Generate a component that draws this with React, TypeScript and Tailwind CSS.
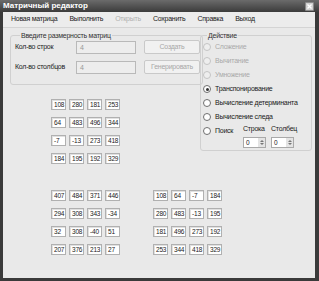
const m1 = [
  ["108", "280", "181", "253"],
  ["64", "483", "496", "344"],
  ["-7", "-13", "273", "418"],
  ["184", "195", "192", "329"],
];

const m2 = [
  ["407", "484", "371", "446"],
  ["294", "308", "343", "-34"],
  ["32", "308", "-40", "51"],
  ["207", "376", "213", "27"],
];

const m3 = [
  ["108", "64", "-7", "184"],
  ["280", "483", "-13", "195"],
  ["181", "496", "273", "192"],
  ["253", "344", "418", "329"],
];

const menu = [
  { label: "Новая матрица" },
  { label: "Выполнить" },
  { label: "Открыть", disabled: true },
  { label: "Сохранить" },
  { label: "Справка" },
  { label: "Выход" },
];

const actions = [
  { label: "Сложение", disabled: true },
  { label: "Вычитание", disabled: true },
  { label: "Умножение", disabled: true },
  { label: "Транспонирование", checked: true },
  { label: "Вычисление детерминанта" },
  { label: "Вычисление следа" },
];

const Radio = ({ checked, disabled }: { checked?: boolean; disabled?: boolean }) => (
  <span
    className={`w-[8px] h-[8px] rounded-full border flex items-center justify-center shrink-0 ${
      disabled ? "border-[#c4c4c4] bg-[#eeeeee]" : "border-[#6f6f6f] bg-white"
    }`}
  >
    {checked && <span className="w-[3px] h-[3px] rounded-full bg-[#333]" />}
  </span>
);

const Matrix = ({ data }: { data: string[][] }) => (
  <div className="grid grid-cols-[repeat(4,15px)] gap-x-[3px] gap-y-[7px]">
    {data.flat().map((v, i) => (
      <div
        key={i}
        className="h-[11px] bg-white border border-[#b0b0b0] shadow-[inset_1px_1px_0_#e0e0e0] pl-[2px] text-[6.5px] leading-[9px] text-[#222] tracking-[-0.2px]"
      >
        {v}
      </div>
    ))}
  </div>
);

const Spinner = () => (
  <div className="w-[23px] h-[11px] bg-white border border-[#a9a9a9] flex">
    <span className="flex-1 pl-[2px] text-[6.5px] leading-[9px] text-[#222]">0</span>
    <span className="w-[7px] bg-[#e4e4e4] flex flex-col items-center justify-center gap-[1px]">
      <span className="w-0 h-0 border-x-[2px] border-x-transparent border-b-[2px] border-b-[#777]" />
      <span className="w-0 h-0 border-x-[2px] border-x-transparent border-t-[2px] border-t-[#777]" />
    </span>
  </div>
);

export default function App() {
  return (
    <div
      className="w-[319px] h-[281px] bg-[#3a3a3a] flex flex-col overflow-hidden text-[#222]"
      style={{ fontFamily: '"Liberation Sans", Arial, sans-serif' }}
    >
      {/* title bar */}
      <div className="h-[12px] shrink-0 bg-gradient-to-b from-[#6b6b6b] to-[#3c3c3c] flex items-center pl-[3px] pr-[5px]">
        <span className="text-[8px] font-bold text-white leading-none">Матричный редактор</span>
        <span className="ml-auto w-[9px] h-[9px] rounded-[1px] bg-[#cfcfcf] border border-[#8a8a8a] flex items-center justify-center">
          <svg width="5" height="5" viewBox="0 0 5 5">
            <path d="M0.5 0.5 L4.5 4.5 M4.5 0.5 L0.5 4.5" stroke="#fff" strokeWidth="1.3" />
          </svg>
        </span>
      </div>

      <div className="flex-1 ml-[3px] mr-[4px] mb-[3px] bg-[#e9e9e9] flex flex-col whitespace-nowrap tracking-[-0.25px]">
        {/* menu */}
        <div className="h-[16px] shrink-0 border-b border-[#d4d4d4] bg-[#ececec] flex items-center gap-[12px] pl-[8px] text-[7px]">
          {menu.map((m) => (
            <span key={m.label} className={m.disabled ? "text-[#b0b0b0]" : "text-[#1a1a1a]"}>
              {m.label}
            </span>
          ))}
        </div>

        <div className="flex mt-[3px] pl-[7px]">
          {/* left column */}
          <div className="w-[185px] flex flex-col">
            <fieldset className="border border-[#d0d0d0] rounded-[3px] pl-[4px] pr-[2px] pb-[10px]">
              <legend className="ml-[5px] px-[1px] text-[7px] leading-[9px] text-[#333]">
                Введите размерность матриц
              </legend>
              <div className="grid grid-cols-[53px_60px_56px] gap-x-[8px] gap-y-[6px] items-center text-[7px]">
                <span>Кол-во строк</span>
                <div className="h-[13px] border border-[#b9b9b9] bg-[#ededed] pl-[3px] text-[#999] leading-[11px]">4</div>
                <div className="h-[14px] border border-[#c9c9c9] rounded-[2px] bg-[#f1f1f1] text-[#a8a8a8] flex items-center justify-center">
                  Создать
                </div>
                <span>Кол-во столбцов</span>
                <div className="h-[13px] border border-[#b9b9b9] bg-[#ededed] pl-[3px] text-[#999] leading-[11px]">4</div>
                <div className="h-[14px] border border-[#c9c9c9] rounded-[2px] bg-[#f1f1f1] text-[#a8a8a8] flex items-center justify-center">
                  Генерировать
                </div>
              </div>
            </fieldset>
            <div className="mt-[14px] ml-[41px]">
              <Matrix data={m1} />
            </div>
          </div>

          {/* actions */}
          <fieldset className="ml-[5px] w-[112px] self-start border border-[#d0d0d0] rounded-[3px] pl-[2px] pb-[2px]">
            <legend className="ml-[4px] px-[1px] text-[7px] leading-[9px] text-[#333]">Действие</legend>
            <div className="flex flex-col text-[7px]">
              {actions.map((a) => (
                <div key={a.label} className="h-[14px] flex items-center gap-[4px]">
                  <Radio checked={a.checked} disabled={a.disabled} />
                  <span className={a.disabled ? "text-[#a9a9a9]" : "text-[#1a1a1a]"}>{a.label}</span>
                </div>
              ))}
              <div className="flex items-start">
                <div className="w-[40px] h-[14px] flex items-center gap-[4px]">
                  <Radio />
                  <span>Поиск</span>
                </div>
                <div className="flex gap-[5px]">
                  <div className="flex flex-col gap-[3px]">
                    <span className="h-[10px] leading-[10px]">Строка</span>
                    <Spinner />
                  </div>
                  <div className="flex flex-col gap-[3px]">
                    <span className="h-[10px] leading-[10px]">Столбец</span>
                    <Spinner />
                  </div>
                </div>
              </div>
            </div>
          </fieldset>
        </div>

        {/* result matrices */}
        <div className="flex gap-[33px] mt-[26px] pl-[48px]">
          <Matrix data={m2} />
          <Matrix data={m3} />
        </div>
      </div>
    </div>
  );
}
